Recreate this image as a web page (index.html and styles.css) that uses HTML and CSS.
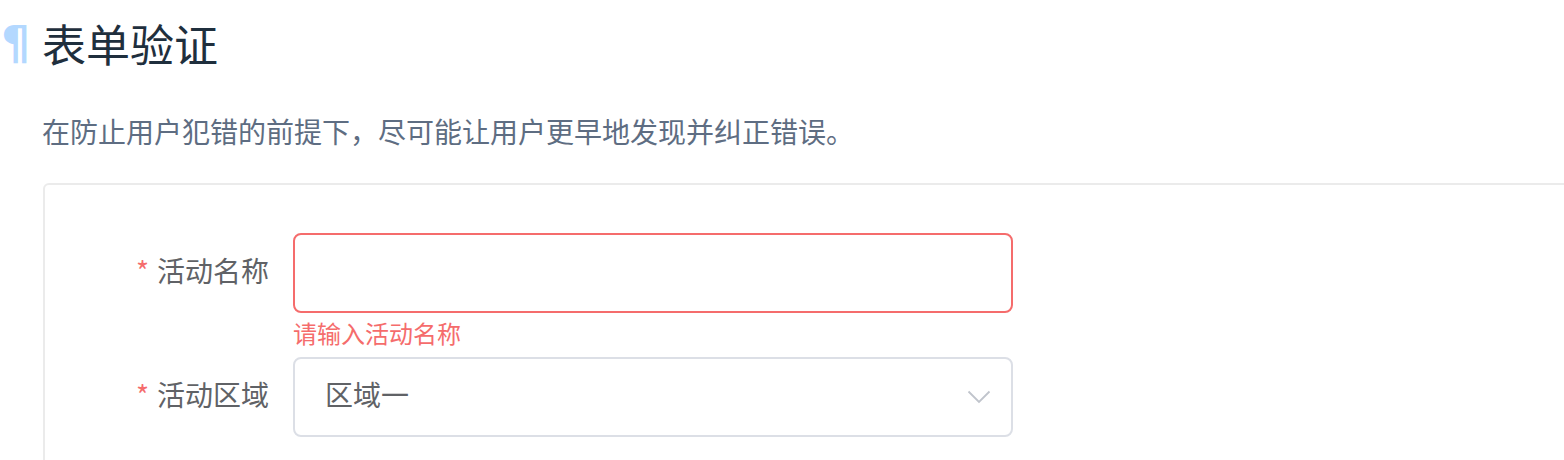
FILE: index.html
```html
<!DOCTYPE html>
<html lang="zh-CN">
<head>
<meta charset="utf-8">
<link rel="stylesheet" href="styles.css">
</head>
<body>
<div class="page">
  <h2 class="title"><a class="anchor">¶</a><span>表单验证</span></h2>
  <p class="desc">在防止用户犯错的前提下，尽可能让用户更早地发现并纠正错误。</p>
  <div class="card">
    <form class="form">
      <div class="item is-error">
        <label class="label"><span class="star">*</span>活动名称</label>
        <div class="content">
          <div class="input"></div>
          <div class="error">请输入活动名称</div>
        </div>
      </div>
      <div class="item">
        <label class="label"><span class="star">*</span>活动区域</label>
        <div class="content">
          <div class="input select">
            <span class="value">区域一</span>
            <svg class="arrow" width="24" height="14" viewBox="0 0 24 14"><path d="M1.5 1.5 L12 12 L22.5 1.5" fill="none" stroke="#c0c4cc" stroke-width="1.8"/></svg>
          </div>
        </div>
      </div>
    </form>
  </div>
</div>
</body>
</html>
```

FILE: styles.css
```css
html, body {
  margin: 0;
  padding: 0;
  background: #fff;
  overflow: hidden;
}
body {
  font-family: "Noto Sans CJK SC", "Noto Sans", sans-serif;
}
.page {
  padding: 21px 0 0 0;
}
.title {
  display: flex;
  align-items: center;
  margin: 0;
  font-size: 44px;
  line-height: 44px;
  font-weight: 400;
  color: #1f2f3d;
}
.anchor {
  width: 42px;
  font-family: "DejaVu Sans", sans-serif;
  font-weight: 700;
  font-size: 46px;
  line-height: 44px;
  color: #b3d8ff;
  padding-left: 1px;
  box-sizing: border-box;
}
.desc {
  margin: 52px 0 0 42px;
  font-size: 28px;
  line-height: 28px;
  color: #5e6d82;
}
.card {
  margin: 38px 0 0 43px;
  width: 1700px;
  height: 400px;
  border: 2px solid #ebebeb;
  border-radius: 6px;
  padding: 48px;
  box-sizing: border-box;
}
.item {
  display: flex;
  margin-bottom: 44px;
}
.label {
  width: 200px;
  flex: none;
  box-sizing: border-box;
  padding-right: 24px;
  padding-bottom: 6px;
  text-align: right;
  font-size: 28px;
  line-height: 74px;
  color: #606266;
}
.star {
  color: #f56c6c;
  margin-right: 8px;
}
.content {
  position: relative;
}
.input {
  width: 720px;
  height: 80px;
  box-sizing: border-box;
  border: 2px solid #dcdfe6;
  border-radius: 8px;
  background: #fff;
}
.is-error .input {
  border-color: #f56c6c;
}
.error {
  position: absolute;
  top: 100%;
  left: 0;
  padding-top: 8px;
  font-size: 24px;
  line-height: 24px;
  color: #f56c6c;
  white-space: nowrap;
}
.select {
  display: flex;
  align-items: center;
  justify-content: space-between;
  padding: 0 20px 0 30px;
}
.value {
  font-size: 28px;
  line-height: 28px;
  padding-bottom: 6px;
  color: #606266;
}
.arrow {
  display: block;
}
```
